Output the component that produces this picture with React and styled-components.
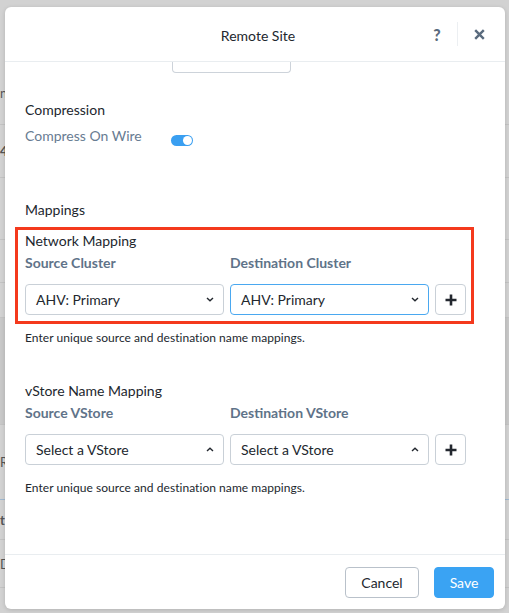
import React from "react";
import styled, { createGlobalStyle } from "styled-components";

const Global = createGlobalStyle`
  html, body { margin: 0; padding: 0; }
  body {
    width: 509px; height: 613px; overflow: hidden;
    background: #cfcfcf;
    font-family: Lato, "Open Sans", "Liberation Sans", sans-serif;
    color: #22272e;
  }
  * { box-sizing: border-box; }
`;

const Stage = styled.div`
  position: relative;
  width: 509px;
  height: 613px;
  overflow: hidden;
`;

const Backdrop = styled.div`
  display: flex;
  flex-direction: column;
  width: 509px;
  height: 613px;
  background: #d2d2d2;
`;

const BackRow = styled.div`
  height: ${(p) => p.$h}px;
  border-bottom: 1px solid ${(p) => p.$line || "#c3c3c3"};
  background: ${(p) => p.$bg || "transparent"};
  display: flex;
  align-items: center;
  font-size: 13px;
  font-weight: ${(p) => (p.$bold ? 700 : 400)};
  color: #555;
  white-space: nowrap;
`;

const Modal = styled.div`
  position: absolute;
  left: 5px;
  top: 7px;
  width: 500px;
  height: 602px;
  background: #fff;
  border-radius: 6px;
  box-shadow: 0 1px 4px rgba(0, 0, 0, 0.15);
  display: flex;
  flex-direction: column;
  overflow: hidden;
`;

const Header = styled.div`
  height: 55px;
  flex: none;
  border-bottom: 1px solid #e9edf0;
  display: grid;
  grid-template-columns: 1fr auto 1fr;
  align-items: center;
  padding: 0 14px 0 20px;
`;

const Title = styled.div`
  grid-column: 2;
  font-size: 14px;
  color: #22272e;
  padding-top: 2px;
`;

const HeaderTools = styled.div`
  grid-column: 3;
  justify-self: end;
  display: flex;
  align-items: center;
`;

const ToolButton = styled.div`
  width: 24px;
  height: 24px;
  display: flex;
  align-items: center;
  justify-content: center;
  color: #5a6b7e;
  font-weight: 900;
  font-size: 16px;
`;

const ToolDivider = styled.div`
  width: 1px;
  height: 24px;
  background: #eceff2;
  margin: 0 9px 0 8px;
`;

const Body = styled.div`
  flex: 1;
  display: flex;
  flex-direction: column;
  padding: 0 20px;
`;

const CutInput = styled.div`
  margin-left: 147px;
  width: 119px;
  height: 11px;
  border: 1px solid #cdd3da;
  border-top: none;
  border-radius: 0 0 4px 4px;
`;

const SectionTitle = styled.div`
  font-size: 14px;
  line-height: 16px;
  color: #22272e;
  margin-top: ${(p) => p.$mt || 0}px;
`;

const SwitchRow = styled.div`
  display: flex;
  align-items: center;
  margin-top: 10px;
  height: 16px;
`;

const SwitchLabel = styled.div`
  width: 146px;
  font-size: 14px;
  line-height: 16px;
  color: #687c92;
`;

const Toggle = styled.div`
  width: 22px;
  height: 11px;
  border-radius: 6px;
  background: #3a9ff1;
  margin-top: 9px;
  display: flex;
  justify-content: flex-end;
  align-items: center;
  padding: 0 1px;
`;

const Knob = styled.div`
  width: 9px;
  height: 9px;
  border-radius: 50%;
  background: #fff;
`;

const Group = styled.div`
  width: 459px;
  margin-left: -10px;
  border: 3px solid ${(p) => (p.$highlight ? "#f4391d" : "transparent")};
  padding: 3px 5px 6px 7px;
  margin-top: ${(p) => p.$mt || 0}px;
`;

const GroupTitle = styled.div`
  font-size: 14px;
  line-height: 16px;
  color: #22272e;
`;

const Grid = styled.div`
  margin-top: 6px;
  display: grid;
  grid-template-columns: 199px 199px 31px;
  column-gap: 6px;
  row-gap: 13px;
`;

const FieldLabel = styled.div`
  font-size: 14px;
  line-height: 16px;
  font-weight: 700;
  color: #5f7389;
`;

const Select = styled.div`
  height: 31px;
  border: 1px solid ${(p) => (p.$focused ? "#4aa8f0" : "#c9d0d7")};
  border-radius: 4px;
  display: flex;
  align-items: center;
  justify-content: space-between;
  padding: 0 9px 0 10px;
  font-size: 14px;
  color: #22272e;
`;

const AddButton = styled.div`
  height: 31px;
  border: 1px solid #c9d0d7;
  border-radius: 4px;
  display: flex;
  align-items: center;
  justify-content: center;
`;

const Help = styled.div`
  font-size: 12px;
  line-height: 14px;
  letter-spacing: 0.05px;
  color: #22272e;
  margin-top: 7px;
`;

const Footer = styled.div`
  flex: none;
  border-top: 1px solid #e9edf0;
  display: flex;
  justify-content: flex-end;
  gap: 15px;
  padding: 12px 11px 11px;
`;

const Button = styled.div`
  height: 31px;
  width: ${(p) => p.$w}px;
  border-radius: 4px;
  display: flex;
  align-items: center;
  justify-content: center;
  font-size: 14px;
  border: 1px solid ${(p) => (p.$primary ? "#3aa3f3" : "#b9c1ca")};
  background: ${(p) => (p.$primary ? "#3aa3f3" : "#fff")};
  color: ${(p) => (p.$primary ? "#fff" : "#22272e")};
`;

const Chevron = ({ up }) => (
  <svg width="8" height="5" viewBox="0 0 8 5">
    <path
      d={up ? "M1 4 L4 1.2 L7 4" : "M1 1 L4 3.8 L7 1"}
      fill="none"
      stroke="#22272e"
      strokeWidth="1.4"
    />
  </svg>
);

const Plus = () => (
  <svg width="12" height="12" viewBox="0 0 12 12">
    <path d="M6 0.5 V11.5 M0.5 6 H11.5" stroke="#22272e" strokeWidth="2.6" />
  </svg>
);

const CloseIcon = () => (
  <svg width="11" height="11" viewBox="0 0 11 11">
    <path d="M1.2 1.2 L9.8 9.8 M9.8 1.2 L1.2 9.8" stroke="#5a6b7e" strokeWidth="2.4" />
  </svg>
);

const MappingGroup = ({ highlight, mt, title, left, right, value, focused, up }) => (
  <Group $highlight={highlight} $mt={mt}>
    <GroupTitle>{title}</GroupTitle>
    <Grid>
      <FieldLabel>{left}</FieldLabel>
      <FieldLabel>{right}</FieldLabel>
      <div />
      <Select>
        {value}
        <Chevron up={up} />
      </Select>
      <Select $focused={focused}>
        {value}
        <Chevron up={up} />
      </Select>
      <AddButton>
        <Plus />
      </AddButton>
    </Grid>
  </Group>
);

export default function App() {
  return (
    <Stage>
      <Global />
      <Backdrop>
        <BackRow $h={62} $line="#d2d2d2" />
        <BackRow $h={63}>nc</BackRow>
        <BackRow $h={53} $bold>4!</BackRow>
        <BackRow $h={62} />
        <BackRow $h={43} />
        <BackRow $h={35} />
        <BackRow $h={107} $bg="#c8c8c8" />
        <BackRow $h={75} $line="#9fb8d0">R</BackRow>
        <BackRow $h={40} $bold>t</BackRow>
        <BackRow $h={48}>D</BackRow>
      </Backdrop>
      <Modal>
        <Header>
          <Title>Remote Site</Title>
          <HeaderTools>
            <ToolButton>?</ToolButton>
            <ToolDivider />
            <ToolButton>
              <CloseIcon />
            </ToolButton>
          </HeaderTools>
        </Header>
        <Body>
          <CutInput />
          <SectionTitle $mt={29}>Compression</SectionTitle>
          <SwitchRow>
            <SwitchLabel>Compress On Wire</SwitchLabel>
            <Toggle>
              <Knob />
            </Toggle>
          </SwitchRow>
          <SectionTitle $mt={58}>Mappings</SectionTitle>
          <MappingGroup
            highlight
            mt={9}
            title="Network Mapping"
            left="Source Cluster"
            right="Destination Cluster"
            value="AHV: Primary"
            focused
          />
          <Help>Enter unique source and destination name mappings.</Help>
          <MappingGroup
            mt={32}
            title="vStore Name Mapping"
            left="Source VStore"
            right="Destination VStore"
            value="Select a VStore"
            up
          />
          <Help>Enter unique source and destination name mappings.</Help>
        </Body>
        <Footer>
          <Button $w={74}>Cancel</Button>
          <Button $w={60} $primary>
            Save
          </Button>
        </Footer>
      </Modal>
    </Stage>
  );
}
